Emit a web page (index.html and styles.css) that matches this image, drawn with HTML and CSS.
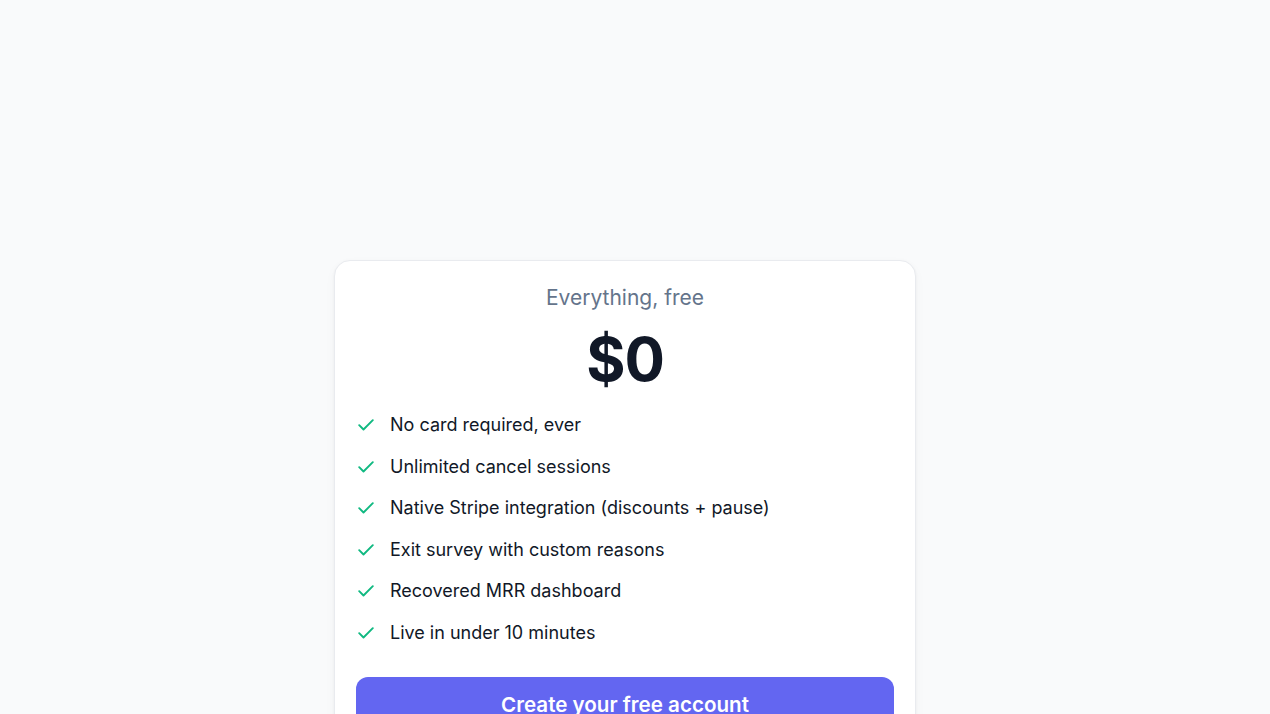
FILE: index.html
```html
<!DOCTYPE html>
<html lang="en">
<head>
<meta charset="utf-8">
<title>Pricing</title>
<link rel="stylesheet" href="styles.css">
</head>
<body>
<main class="page">
  <section class="card">
    <p class="plan">Everything, free</p>
    <p class="price">$0</p>
    <ul class="features">
      <li><svg class="check" viewBox="0 0 16 12"><path d="M1.2 6.2l4.3 4.3L14.8 1.2"/></svg><span>No card required, ever</span></li>
      <li><svg class="check" viewBox="0 0 16 12"><path d="M1.2 6.2l4.3 4.3L14.8 1.2"/></svg><span>Unlimited cancel sessions</span></li>
      <li><svg class="check" viewBox="0 0 16 12"><path d="M1.2 6.2l4.3 4.3L14.8 1.2"/></svg><span>Native Stripe integration (discounts + pause)</span></li>
      <li><svg class="check" viewBox="0 0 16 12"><path d="M1.2 6.2l4.3 4.3L14.8 1.2"/></svg><span>Exit survey with custom reasons</span></li>
      <li><svg class="check" viewBox="0 0 16 12"><path d="M1.2 6.2l4.3 4.3L14.8 1.2"/></svg><span>Recovered MRR dashboard</span></li>
      <li><svg class="check" viewBox="0 0 16 12"><path d="M1.2 6.2l4.3 4.3L14.8 1.2"/></svg><span>Live in under 10 minutes</span></li>
    </ul>
    <a class="cta" href="#">Create your free account</a>
  </section>
</main>
</body>
</html>
```
FILE: styles.css
```css
* { box-sizing: border-box; }
html, body { margin: 0; padding: 0; }
body {
  background: #f9fafb;
  font-family: Inter, "Noto Sans", sans-serif;
  color: #111827;
  height: 714px;
  overflow: hidden;
}
.page {
  display: flex;
  justify-content: center;
  padding-top: 260px;
  padding-right: 20px;
}
.card {
  width: 582px;
  background: #ffffff;
  border: 1px solid #e9ebef;
  border-radius: 16px;
  box-shadow: 0 1px 3px rgba(17, 24, 39, 0.05), 0 4px 12px rgba(17, 24, 39, 0.03);
  padding: 23px 21px 40px;
}
.plan {
  margin: 0;
  text-align: center;
  font-size: 21px;
  line-height: 28px;
  color: #64748b;
}
.price {
  margin: 17px 0 0;
  text-align: center;
  font-size: 60px;
  line-height: 60px;
  font-weight: 700;
  letter-spacing: -1px;
  color: #111827;
}
.features {
  list-style: none;
  margin: 22px 0 0;
  padding: 0;
  display: flex;
  flex-direction: column;
  gap: 13.6px;
}
.features li {
  display: flex;
  align-items: center;
  gap: 16px;
  font-size: 18px;
  line-height: 28px;
  color: #111827;
  padding-left: 2px;
}
.check {
  width: 16px;
  height: 12px;
  flex: none;
  fill: none;
  stroke: #10b981;
  stroke-width: 1.9;
  stroke-linecap: round;
  stroke-linejoin: round;
}
.cta {
  display: block;
  margin-top: 30px;
  height: 56px;
  line-height: 56px;
  border-radius: 12px;
  background: #6366f1;
  color: #ffffff;
  text-align: center;
  font-size: 20.6px;
  font-weight: 600;
  text-decoration: none;
}
```
